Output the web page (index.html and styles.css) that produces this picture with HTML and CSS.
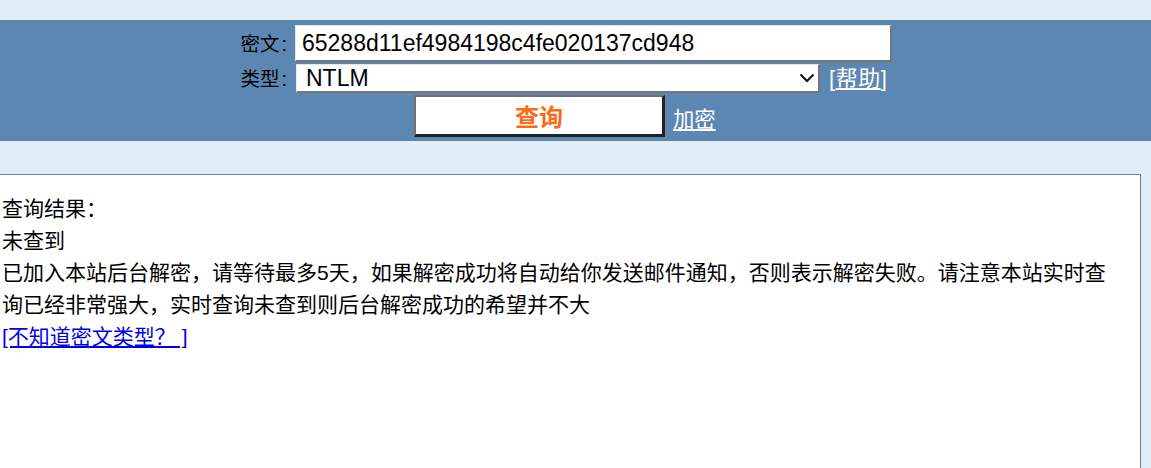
FILE: index.html
```html
<!DOCTYPE html>
<html lang="zh-CN">
<head>
<meta charset="utf-8">
<title>查询</title>
<link rel="stylesheet" href="styles.css">
</head>
<body>
<div class="page">
  <form class="band">
    <div class="grid">
      <label class="lbl" for="hash">密文<span class="colon">:</span></label>
      <input class="hash" id="hash" type="text" value="65288d11ef4984198c4fe020137cd948">
      <label class="lbl" for="type">类型<span class="colon">:</span></label>
      <div class="typerow">
        <span class="selwrap">
          <select class="sel" id="type"><option>NTLM</option></select>
          <svg class="chev" width="16" height="10" viewBox="0 0 16 10"><path d="M1.5 1.5 L8 8 L14.5 1.5" fill="none" stroke="#111" stroke-width="2"/></svg>
        </span>
        <span class="help">[<a href="#">帮助</a>]</span>
      </div>
    </div>
    <div class="actions">
      <button type="button" class="btn">查询</button>
      <a class="enc" href="#">加密</a>
    </div>
  </form>
  <div class="result">
    <div class="line">查询结果：</div>
    <div class="line">未查到</div>
    <div class="line">已加入本站后台解密，请等待最多5天，如果解密成功将自动给你发送邮件通知，否则表示解密失败。请注意本站实时查询已经非常强大，实时查询未查到则后台解密成功的希望并不大</div>
    <div class="line"><a class="blue" href="#">[不知道密文类型？ ]</a></div>
  </div>
</div>
</body>
</html>
```
FILE: styles.css
```css
html, body {
  margin: 0;
  padding: 0;
  background: #e1edf7;
  overflow: hidden;
}
.page {
  padding-top: 20px;
  font-family: "Liberation Sans", "Noto Sans CJK SC", sans-serif;
  color: #000;
}
.band {
  margin: 0;
  background: #5b87b2;
  height: 121px;
  box-sizing: border-box;
  padding: 5px 0 0 229px;
}
.grid {
  display: grid;
  grid-template-columns: 66px auto;
  row-gap: 2px;
  align-items: center;
}
.lbl {
  font-size: 19.5px;
  text-align: right;
  padding-right: 8px;
  line-height: 26px;
  white-space: nowrap;
}
.colon {
  padding-left: 2px;
}
.hash {
  width: 597px;
  height: 37px;
  box-sizing: border-box;
  margin: 0;
  border-style: solid;
  border-width: 1px 2px 2px 1px;
  border-color: #e6e6e6 #767676 #767676 #e6e6e6;
  background: #fff;
  font-family: "Liberation Sans", sans-serif;
  font-size: 23px;
  padding: 0 0 0 6px;
  color: #000;
  outline: none;
}
.typerow {
  display: flex;
  align-items: center;
  gap: 9px;
  padding-left: 1px;
}
.selwrap {
  position: relative;
  display: block;
  width: 524px;
  height: 29px;
}
.sel {
  -webkit-appearance: none;
  appearance: none;
  width: 524px;
  height: 29px;
  box-sizing: border-box;
  margin: 0;
  border-style: solid;
  border-width: 1px 2px 2px 1px;
  border-color: #e6e6e6 #767676 #767676 #e6e6e6;
  background: #fff;
  font-family: "Liberation Sans", sans-serif;
  font-size: 23px;
  line-height: 26px;
  padding: 0 0 0 9px;
  color: #000;
  border-radius: 0;
}
.chev {
  position: absolute;
  left: 503px;
  top: 9px;
}
.help {
  color: #fff;
  font-size: 22px;
  line-height: 26px;
  letter-spacing: 0.5px;
}
.help a, .enc {
  color: #fff;
  text-decoration: underline;
}
.actions {
  display: flex;
  align-items: flex-end;
  gap: 8px;
  padding: 2px 0 0 185px;
}
.btn {
  width: 251px;
  height: 42px;
  box-sizing: border-box;
  margin: 0;
  background: #fff;
  border-style: solid;
  border-width: 2px 3px 3px 2px;
  border-color: #707070 #222 #222 #707070;
  color: #ff6a13;
  font-family: "Noto Sans CJK SC", sans-serif;
  font-weight: bold;
  font-size: 24px;
  line-height: 30px;
  padding: 0;
}
.enc {
  font-size: 21.33px;
  line-height: 30px;
  padding-bottom: 2px;
}
.result {
  margin-top: 33px;
  width: 1141px;
  height: 320px;
  box-sizing: border-box;
  background: #fff;
  border-top: 1px solid #5b87b2;
  border-right: 1px solid #5b87b2;
  padding: 18px 20px 0 2px;
  font-size: 21px;
  line-height: 32px;
}
.line {
  line-height: 32px;
}
.blue {
  color: #0000ee;
  text-decoration: underline;
}
```
